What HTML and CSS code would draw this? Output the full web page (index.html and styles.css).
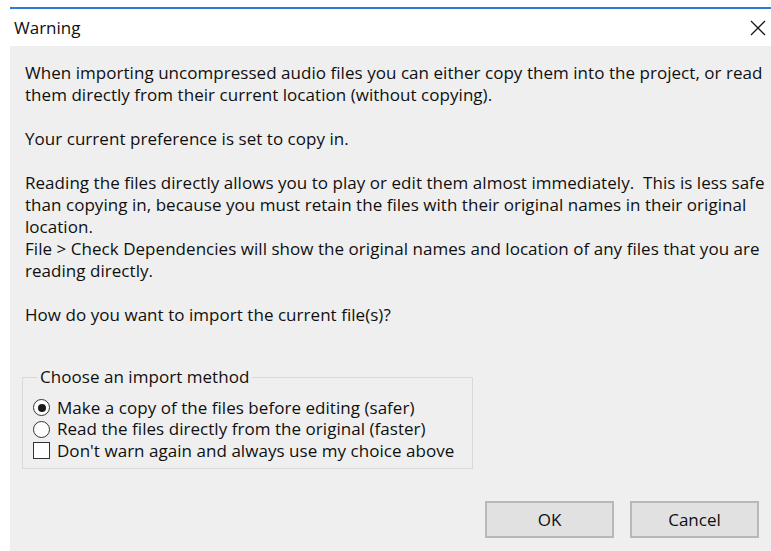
FILE: index.html
```html
<!DOCTYPE html>
<html lang="en">
<head>
<meta charset="utf-8">
<title>Warning</title>
<link rel="stylesheet" href="styles.css">
</head>
<body>
<div class="dialog">
  <div class="titlebar">
    <span class="title">Warning</span>
    <button class="close" aria-label="Close">
      <svg width="16" height="16" viewBox="0 0 16 16"><path d="M1 1 L15 15 M15 1 L1 15" stroke="#1a1a1a" stroke-width="1.3" fill="none"/></svg>
    </button>
  </div>
  <div class="content">
    <p>When importing uncompressed audio files you can either copy them into the project, or read<br>them directly from their current location (without copying).</p>
    <p>Your current preference is set to copy in.</p>
    <p>Reading the files directly allows you to play or edit them almost immediately.&nbsp; This is less safe<br>than copying in, because you must retain the files with their original names in their original<br>location.<br>File &gt; Check Dependencies will show the original names and location of any files that you are<br>reading directly.</p>
    <p>How do you want to import the current file(s)?</p>
    <fieldset class="group">
      <legend>Choose an import method</legend>
      <label class="opt"><span class="radio checked"></span>Make a copy of the files before editing (safer)</label>
      <label class="opt"><span class="radio"></span>Read the files directly from the original (faster)</label>
      <label class="opt"><span class="check"></span>Don't warn again and always use my choice above</label>
    </fieldset>
    <div class="buttons">
      <button class="btn">OK</button>
      <button class="btn">Cancel</button>
    </div>
  </div>
</div>
</body>
</html>
```
FILE: styles.css
```css
html, body {
  margin: 0;
  padding: 0;
  background: #ffffff;
  height: 100%;
}

body {
  padding: 7px 0 0 10px;
  box-sizing: border-box;
  overflow: hidden;
  font-family: "Open Sans", "Noto Sans", sans-serif;
  font-size: 17px;
  color: #0f0f0f;
}

.dialog {
  border-top: 2px solid #2b7bd4;
  display: flex;
  flex-direction: column;
  height: calc(100% - 2px);
}

.titlebar {
  height: 37px;
  background: #ffffff;
  display: flex;
  align-items: center;
  justify-content: space-between;
  padding: 0 5px 0 4px;
}

.title {
  font-size: 17px;
  margin-top: -1px;
}

.close {
  border: 0;
  background: none;
  padding: 0;
  width: 16px;
  height: 16px;
  display: flex;
}

.content {
  flex: 1;
  background: #efefef;
  padding: 16px 0 0 15px;
  line-height: 22px;
  letter-spacing: 0.04px;
}

.content p {
  margin: 0 0 22px 0;
  white-space: nowrap;
}

.group {
  width: 451px;
  box-sizing: border-box;
  margin: 40px 0 0 -3px;
  padding: 9px 0 6px 10px;
  border: 1px solid #d9d9d9;
}

.group legend {
  padding: 0 3px;
  margin-left: 4px;
}

.opt {
  display: flex;
  align-items: center;
  height: 21.5px;
  white-space: nowrap;
}

.radio {
  width: 17px;
  height: 17px;
  border: 1px solid #333;
  border-radius: 50%;
  background: #fff;
  margin-right: 7px;
  box-sizing: border-box;
  position: relative;
  flex: none;
}

.radio.checked::after {
  content: "";
  position: absolute;
  left: 3.5px;
  top: 3.5px;
  width: 8px;
  height: 8px;
  border-radius: 50%;
  background: #1a1a1a;
}

.check {
  width: 17px;
  height: 17px;
  border: 1px solid #333;
  background: #fff;
  margin-right: 7px;
  box-sizing: border-box;
  flex: none;
}

.buttons {
  display: flex;
  justify-content: flex-end;
  gap: 16px;
  margin-top: 32px;
  padding-right: 12px;
}

.btn {
  width: 129px;
  height: 37px;
  background: #e1e1e1;
  border: 2px solid #b8b8b8;
  font-family: inherit;
  font-size: 17px;
  color: #0f0f0f;
}
```
